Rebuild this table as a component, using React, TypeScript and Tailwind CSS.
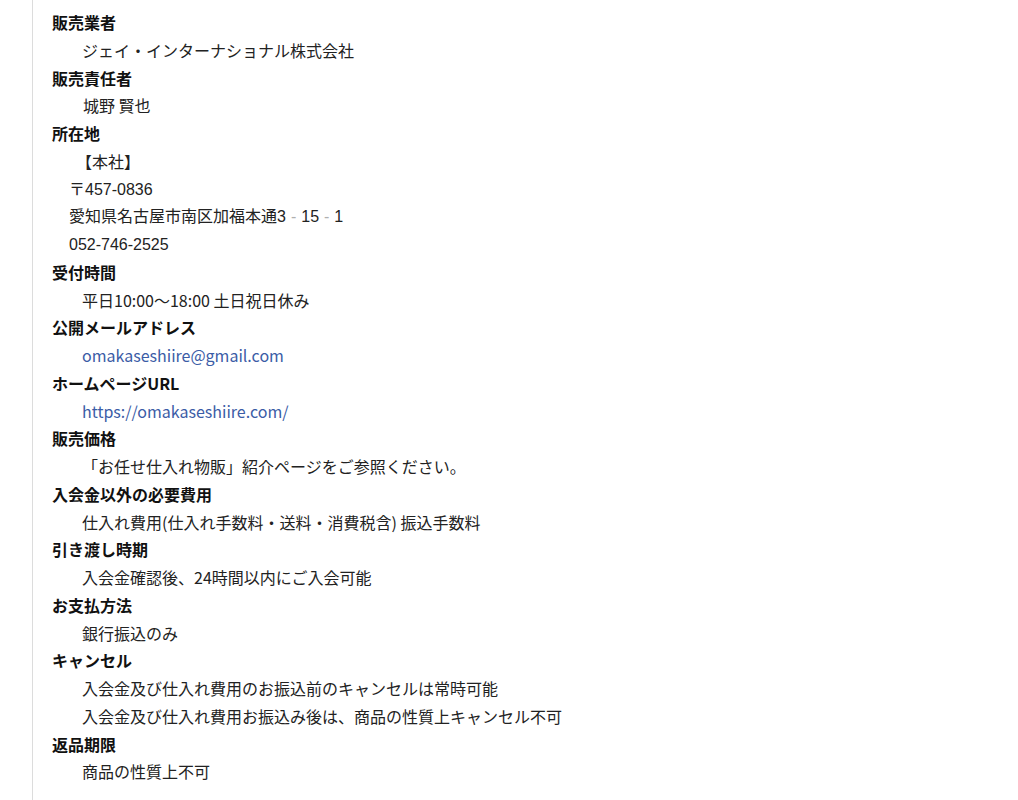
import React from "react";

const jp = { fontFamily: '"Noto Sans CJK JP", "Noto Sans", sans-serif' };
const arial = { fontFamily: '"Liberation Sans", "Noto Sans CJK JP", sans-serif' };

function Dt({ children }: { children: React.ReactNode }) {
  return <dt className="font-bold text-[16px] leading-[27.75px] text-[#111]">{children}</dt>;
}
function Dd({ children }: { children: React.ReactNode }) {
  return <dd className="pl-[30px] text-[16px] leading-[27.75px] text-[#222]">{children}</dd>;
}

export default function App() {
  return (
    <div className="w-[1018px] h-[800px] bg-white overflow-hidden" style={jp}>
      <div className="ml-[32px] h-full border-l border-[#dcdcdc] pl-[19px] pt-[9px]">
        <dl>
          <Dt>販売業者</Dt>
          <Dd>ジェイ・インターナショナル株式会社</Dd>
          <Dt>販売責任者</Dt>
          <Dd><span className="pl-[1px]">城野 賢也</span></Dd>
          <Dt>所在地</Dt>
          <dd className="text-[16px] leading-[27.8px] text-[#222]">
            <div className="pl-[24px]">【本社】</div>
            <div className="pl-[17px]" style={arial}>〒457-0836</div>
            <div className="pl-[17px]" style={arial}>
              愛知県名古屋市南区加福本通3<span className="text-[#b0b0b0] px-[5px]">-</span>15<span className="text-[#b0b0b0] px-[5px]">-</span>1
            </div>
            <div className="pl-[17px]" style={arial}>052-746-2525</div>
          </dd>
          <Dt>受付時間</Dt>
          <Dd>平日10:00～18:00 土日祝日休み</Dd>
          <Dt>公開メールアドレス</Dt>
          <Dd><a className="text-[#3b5ca6]">omakaseshiire@gmail.com</a></Dd>
          <Dt>ホームページURL</Dt>
          <Dd><a className="text-[#3b5ca6]">https://omakaseshiire.com/</a></Dd>
          <Dt>販売価格</Dt>
          <Dd>「お任せ仕入れ物販」紹介ページをご参照ください。</Dd>
          <Dt>入会金以外の必要費用</Dt>
          <Dd>仕入れ費用(仕入れ手数料・送料・消費税含) 振込手数料</Dd>
          <Dt>引き渡し時期</Dt>
          <Dd>入会金確認後、24時間以内にご入会可能</Dd>
          <Dt>お支払方法</Dt>
          <Dd>銀行振込のみ</Dd>
          <Dt>キャンセル</Dt>
          <Dd>
            <div>入会金及び仕入れ費用のお振込前のキャンセルは常時可能</div>
            <div>入会金及び仕入れ費用お振込み後は、商品の性質上キャンセル不可</div>
          </Dd>
          <Dt>返品期限</Dt>
          <Dd>商品の性質上不可</Dd>
        </dl>
      </div>
    </div>
  );
}
